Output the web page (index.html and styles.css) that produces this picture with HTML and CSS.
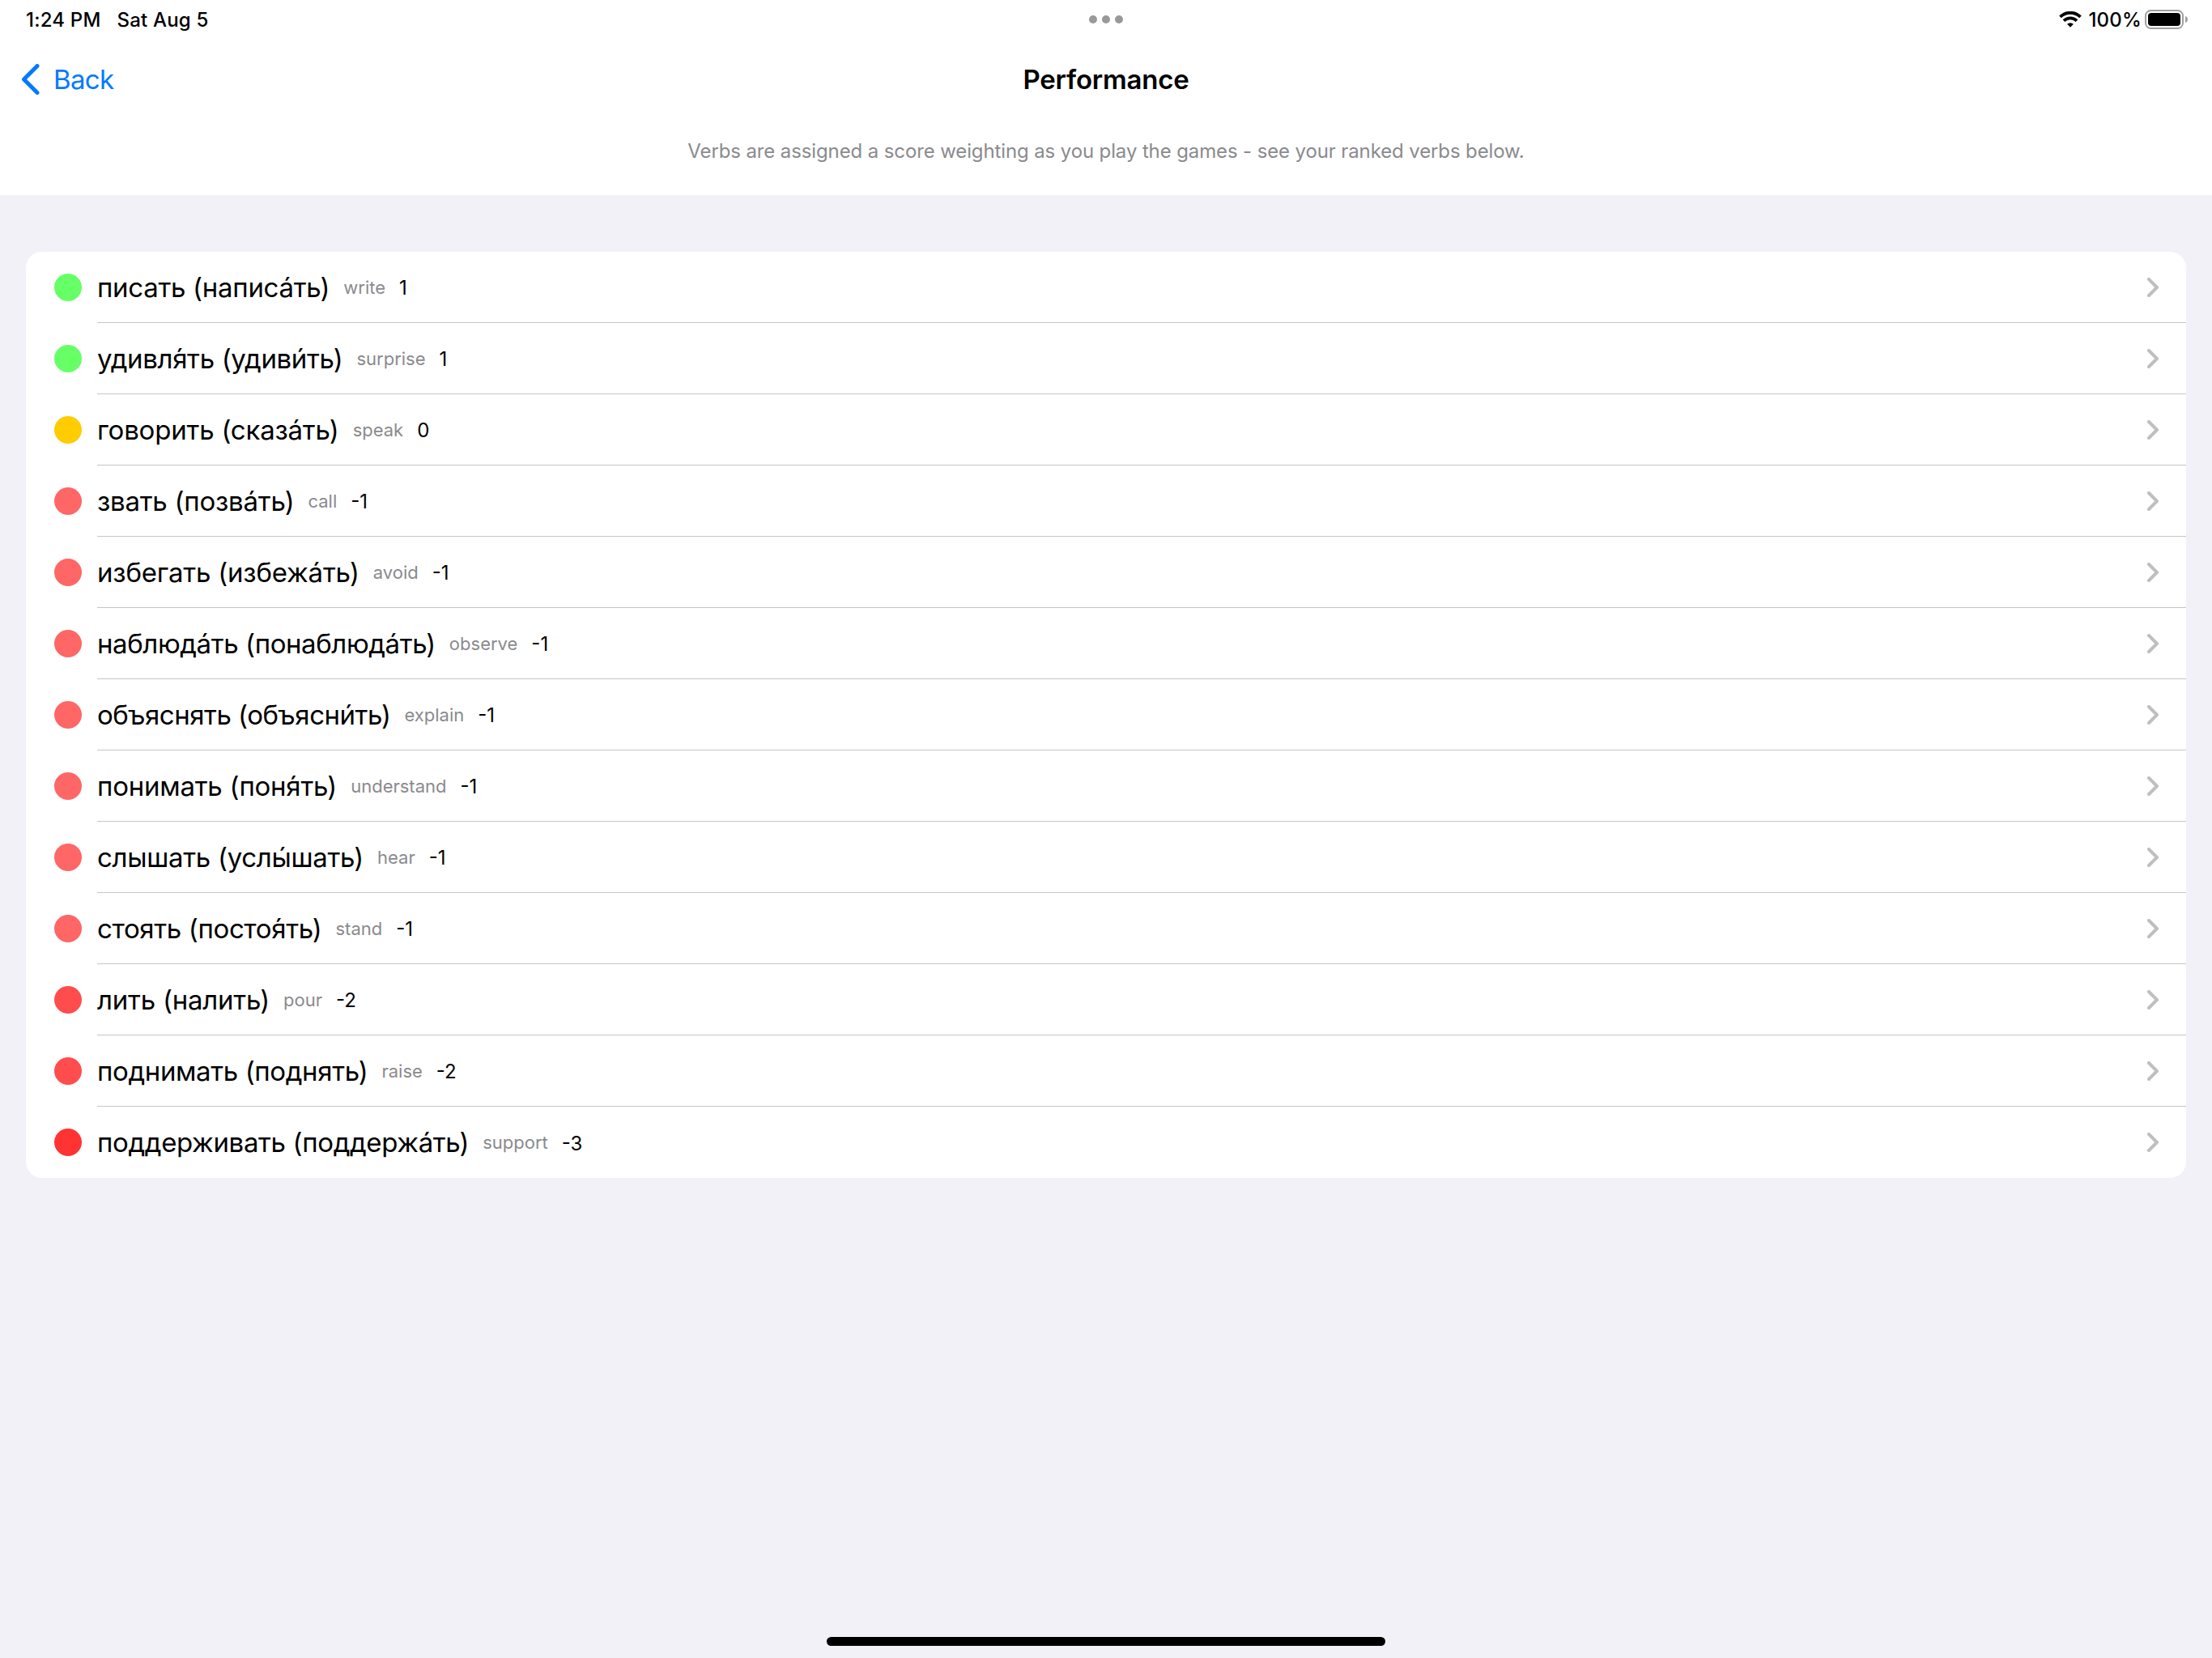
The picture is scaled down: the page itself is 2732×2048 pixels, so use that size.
FILE: index.html
```
<!DOCTYPE html>
<html lang="en">
<head>
  <meta charset="UTF-8">
  <meta name="viewport" content="width=device-width, initial-scale=1.0">
  <title>Performance</title>
  <link rel="stylesheet" href="styles.css">
</head>
<body>
  <header class="header">
    <div class="status-bar">
      <div class="status-left">
        <span class="time">1:24 PM</span>
        <span class="date">Sat Aug 5</span>
      </div>
      <div class="dots">
        <i></i><i></i><i></i>
      </div>
      <div class="status-right">
        <svg class="wifi" width="28" height="20" viewBox="0 0 28 20">
          <path d="M1.5 6.9A17.8 17.8 0 0 1 26.5 6.9" fill="none" stroke="#000" stroke-width="3.8"/>
          <path d="M6 11.6A11.4 11.4 0 0 1 22 11.6" fill="none" stroke="#000" stroke-width="3.8"/>
          <path d="M10.1 15.8A5.8 5.8 0 0 1 17.9 15.8L14 19.8Z" fill="#000"/>
        </svg>
        <span class="percent">100%</span>
        <svg class="battery" width="53" height="24" viewBox="0 0 53 24">
          <rect x="1" y="1" width="46" height="22" rx="6.5" fill="none" stroke="#a0a0a0" stroke-width="2"/>
          <rect x="4" y="4" width="40" height="16" rx="4" fill="#000"/>
          <path d="M50 8C54 9 54 15 50 16Z" fill="#a0a0a0"/>
        </svg>
      </div>
    </div>

    <nav class="nav-bar">
      <a class="back">
        <svg width="24" height="38" viewBox="0 0 24 38">
          <path d="M20 2.5L3.5 19L20 35.5" fill="none" stroke="#007aff" stroke-width="5" stroke-linecap="round" stroke-linejoin="round"/>
        </svg>
        <span>Back</span>
      </a>
      <h1>Performance</h1>
    </nav>

    <p class="intro">Verbs are assigned a score weighting as you play the games - see your ranked verbs below.</p>
  </header>

  <ul class="verbs" id="verbs"></ul>

  <div class="home-indicator"></div>

  <script src="script.js"></script>
</body>
</html>
```
FILE: styles.css
```
* {
  box-sizing: border-box;
}

body {
  display: flex;
  flex-direction: column;
  height: 100vh;
  margin: 0;
  background: #f2f1f7;
  color: #000;
  font-family: Inter, "Liberation Sans", sans-serif;
  overflow: hidden;
}

.header {
  height: 241px;
  background: #fff;
}

/* Status bar */
.status-bar {
  display: grid;
  grid-template-columns: 1fr auto 1fr;
  align-items: center;
  height: 48px;
  padding: 0 31px;
  font-size: 24px;
  font-weight: 500;
  letter-spacing: 0.2px;
}

.status-left {
  display: flex;
  gap: 20px;
  padding-left: 1px;
}

.dots {
  display: flex;
  gap: 6px;
}

.dots i {
  width: 10px;
  height: 10px;
  border-radius: 50%;
  background: #999;
}

.status-right {
  display: flex;
  align-items: center;
  justify-content: flex-end;
}

.percent {
  margin: 0 4px 0 8px;
}

.battery {
  margin-right: -1px;
}

/* Navigation */
.nav-bar {
  display: grid;
  grid-template-columns: 1fr auto 1fr;
  align-items: center;
  height: 100px;
  padding: 0 26px;
}

.back {
  display: flex;
  align-items: center;
  gap: 16px;
  color: #007aff;
  font-size: 33px;
  letter-spacing: -0.65px;
}

.back span {
  padding-bottom: 1px;
}

.nav-bar h1 {
  margin: 0;
  padding-bottom: 1px;
  font-size: 33px;
  font-weight: 600;
  letter-spacing: -0.2px;
}

.intro {
  margin: 0;
  padding-top: 24px;
  color: #8a8a8e;
  font-size: 24px;
  letter-spacing: -0.12px;
  line-height: 30px;
  text-align: center;
}

/* Verb list */
.verbs {
  margin: 70px 32px 0;
  padding: 0;
  border-radius: 20px;
  background: #fff;
  list-style: none;
}

.verb {
  display: flex;
  align-items: center;
  height: 88px;
  padding-left: 35px;
}

.score-dot {
  flex: none;
  width: 34px;
  height: 34px;
  margin-right: 19px;
  border-radius: 50%;
}

.verb-body {
  display: flex;
  flex: 1;
  align-items: center;
  gap: 17px;
  height: 88px;
  padding-right: 34px;
  border-bottom: 1px solid #c6c6c8;
}

.verb:last-child .verb-body {
  border-bottom: 0;
}

.name {
  font-size: 33px;
}

/* Inter has no mark anchor on я, so the stress is pulled back over it */
.stress {
  display: inline-block;
  position: relative;
  left: -14.5px;
  width: 0;
}

.meaning {
  color: #8a8a8e;
  font-size: 22px;
}

.score {
  padding-top: 2px;
  font-size: 24px;
}

.chevron {
  margin-left: auto;
}

.home-indicator {
  width: 690px;
  height: 11px;
  margin: auto auto 15px;
  border-radius: 5.5px;
  background: #000;
}
```
FILE: script.js
```
// name, meaning, score, letter spacing
const verbs = [
  ['писать (написа́ть)', 'write', 1, -0.3],
  ['удивля́ть (удиви́ть)', 'surprise', 1, -0.35],
  ['говорить (сказа́ть)', 'speak', 0, -0.22],
  ['звать (позва́ть)', 'call', -1, -0.25],
  ['избегать (избежа́ть)', 'avoid', -1, -0.21],
  ['наблюда́ть (понаблюда́ть)', 'observe', -1, -0.42],
  ['объяснять (объясни́ть)', 'explain', -1, -0.5],
  ['понимать (поня́ть)', 'understand', -1, -0.24],
  ['слышать (услы́шать)', 'hear', -1, -0.31],
  ['стоять (постоя́ть)', 'stand', -1, -0.37],
  ['лить (налить)', 'pour', -2, -0.24],
  ['поднимать (поднять)', 'raise', -2, -0.38],
  ['поддерживать (поддержа́ть)', 'support', -3, -0.37]
];

const colors = { '1': '#66ff66', '0': '#ffcc00', '-1': '#ff6666', '-2': '#ff4d4d', '-3': '#ff3333' };

document.getElementById('verbs').innerHTML = verbs.map(([name, meaning, score, spacing]) => `
  <li class="verb">
    <span class="score-dot" style="background: ${colors[score]}"></span>
    <div class="verb-body">
      <span class="name" lang="ru" style="letter-spacing: ${spacing}px">${name.replace('я\u0301', 'я<span class="stress">\u0301</span>')}</span>
      <span class="meaning">${meaning}</span>
      <span class="score">${score}</span>
      <svg class="chevron" width="14" height="24" viewBox="0 0 14 24">
        <path d="M2 2L12 12L2 22" fill="none" stroke="#bfbfbf" stroke-width="4" stroke-linecap="round" stroke-linejoin="round"/>
      </svg>
    </div>
  </li>`).join('');
```
